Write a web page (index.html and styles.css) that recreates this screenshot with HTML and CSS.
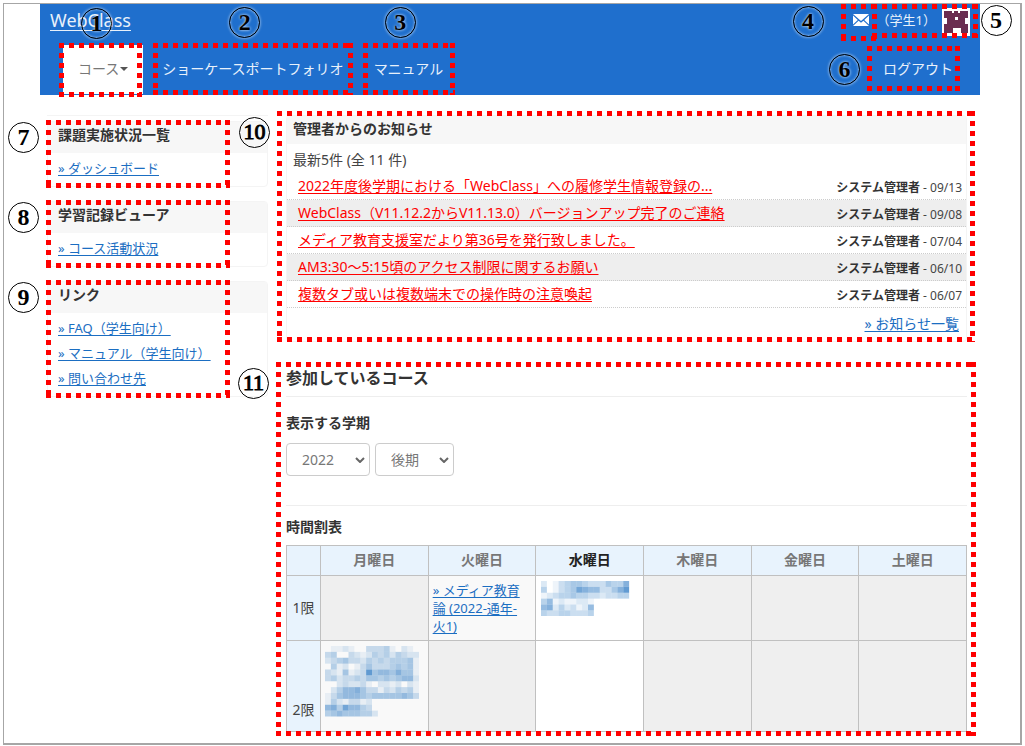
FILE: index.html
```html
<!DOCTYPE html>
<html lang="ja">
<head>
<meta charset="utf-8">
<meta name="viewport" content="width=device-width, initial-scale=1">
<title>WebClass</title>
<link rel="stylesheet" href="styles.css">
</head>
<body>
<div class="page">
  <header class="header">
    <div class="topbar">
      <a class="brand" href="#">WebClass</a>
      <div class="user">
        <a class="mail mark mark-mail" href="#" aria-label="メッセージ">
          <svg width="16" height="12" viewBox="0 0 16 12" aria-hidden="true"><path fill="#fff" d="M0 0h16L8 7zM0 1.6 4.8 6 0 10.4zM16 1.6 11.2 6 16 10.4zM5.6 6.8 8 8.8l2.4-2L16 12H0z"/></svg>
          <span class="num">4</span>
        </a>
        <a class="account mark mark-user" href="#">
          <span>（学生1）</span>
          <svg class="avatar" width="28" height="28" viewBox="0 0 28 28" aria-hidden="true"><path fill="#fff" d="M0 0h28v28H0z"/><path fill="#6b2d50" fill-rule="evenodd" d="M2 3h8v2h2V3h4v2h2V3h8v7h-3v6h3v9h-7v-5h-8v5H2v-9h3v-6H2zM13 9v3h3V9z"/></svg>
          <span class="num">5</span>
        </a>
      </div>
    </div>
    <nav class="nav">
      <ul class="menu">
        <li class="mark mark-course"><a class="active" href="#">コース<span class="caret"></span></a><span class="num">1</span></li>
        <li class="mark mark-showcase"><a href="#">ショーケースポートフォリオ</a><span class="num">2</span></li>
        <li class="mark mark-manual"><a href="#">マニュアル</a><span class="num">3</span></li>
      </ul>
      <ul class="menu">
        <li class="mark mark-logout"><a href="#">ログアウト</a><span class="num">6</span></li>
      </ul>
    </nav>
  </header>

  <main class="main">
    <aside class="sidebar">
      <section class="panel mark mark-side">
        <h2>課題実施状況一覧</h2>
        <ul class="links"><li><a href="#">» ダッシュボード</a></li></ul>
        <span class="num">7</span>
      </section>
      <section class="panel mark mark-side">
        <h2>学習記録ビューア</h2>
        <ul class="links"><li><a href="#">» コース活動状況</a></li></ul>
        <span class="num">8</span>
      </section>
      <section class="panel mark mark-side">
        <h2>リンク</h2>
        <ul class="links">
          <li><a href="#">» FAQ（学生向け）</a></li>
          <li><a href="#">» マニュアル（学生向け）</a></li>
          <li><a href="#">» 問い合わせ先</a></li>
        </ul>
        <span class="num">9</span>
      </section>
    </aside>

    <div class="content">
      <section class="panel news mark mark-news">
        <h2>管理者からのお知らせ</h2>
        <p class="count">最新5件 (全 11 件)</p>
        <ul class="news-list">
          <li><a href="#">2022年度後学期における「WebClass」への履修学生情報登録の...</a><span class="by"><b>システム管理者</b> - 09/13</span></li>
          <li><a href="#">WebClass（V11.12.2からV11.13.0）バージョンアップ完了のご連絡</a><span class="by"><b>システム管理者</b> - 09/08</span></li>
          <li><a href="#">メディア教育支援室だより第36号を発行致しました。</a><span class="by"><b>システム管理者</b> - 07/04</span></li>
          <li><a href="#">AM3:30～5:15頃のアクセス制限に関するお願い</a><span class="by"><b>システム管理者</b> - 06/10</span></li>
          <li><a href="#">複数タブ或いは複数端末での操作時の注意喚起</a><span class="by"><b>システム管理者</b> - 06/07</span></li>
        </ul>
        <p class="more"><a href="#">» お知らせ一覧</a></p>
        <span class="num two-digit">10</span>
      </section>

      <section class="courses mark mark-courses">
        <h1>参加しているコース</h1>
        <h3>表示する学期</h3>
        <form class="term">
          <select aria-label="年度"><option>2022</option></select>
          <select aria-label="学期"><option>後期</option></select>
        </form>
        <h3 class="table-title">時間割表</h3>
        <table class="timetable">
          <thead>
            <tr><th class="period"></th><th>月曜日</th><th>火曜日</th><th class="today">水曜日</th><th>木曜日</th><th>金曜日</th><th>土曜日</th></tr>
          </thead>
          <tbody>
            <tr class="first">
              <th class="period">1限</th><td></td>
              <td class="filled"><a href="#">» メディア教育論 (2022-通年-火1)</a></td>
              <td class="now"><svg class="mosaic" data-rows="201345543335447 401345876633579 123445443323344 461211221 672423126 433443334"></svg></td>
              <td></td><td></td><td></td>
            </tr>
            <tr class="second">
              <th class="period">2限</th>
              <td class="filled"><svg class="mosaic" data-rows="0112100333410210 3400321243424322 2345332434344451 0412013533345451 3215123956657551 3423343554545662 0023223102212021 0246675331324341 1356665455555653 14213312 67486643 456555442"></svg></td>
              <td></td><td class="now"></td><td></td><td></td><td></td>
            </tr>
          </tbody>
        </table>
        <span class="num two-digit">11</span>
      </section>
    </div>
  </main>
</div>
<script src="mosaic.js"></script>
</body>
</html>
```
FILE: styles.css
```css
* { box-sizing: border-box; }

body {
  margin: 3px 3px 2px;
  background: #fff;
  color: #444;
  font: 14px/24px "Noto Sans", "Noto Sans CJK JP", sans-serif;
}

h1, h2, h3, p, ul { margin: 0; padding: 0; }
ul { list-style: none; }
a { color: #1b6ec2; text-underline-offset: 2px; }

.page {
  border: solid #a6a6a6;
  border-width: 1px 2px 2px 1px;
  padding: 0 40px 11px 36px;
}

/* Header */
.header { background: #1f6fcd; color: #fff; }
.header a { color: #e8f1fb; }
.topbar {
  display: flex;
  justify-content: space-between;
  height: 41px;
  padding: 4px 10px 0;
}
.brand { font-size: 18px; text-underline-offset: 3px; }
.user { display: flex; gap: 8px; height: 28px; }
.user a { display: flex; align-items: flex-start; text-decoration: none; font-size: 13px; }
.mail svg { margin-top: 6px; }
.account { gap: 6px; }
.nav { display: flex; justify-content: space-between; height: 50px; padding: 0 12px 0 23px; }
.menu { display: flex; }
.menu a { display: flex; align-items: center; height: 49px; padding: 0 15px 1px; text-decoration: none; }
.menu .active { background: #fff; color: #777; margin-right: 4px; }
.caret { border: 4px solid transparent; border-top-color: #555; border-bottom: 0; margin-left: 1px; }

/* Columns */
.main {
  display: grid;
  grid-template-columns: 221px 1fr;
  gap: 18px;
  padding: 20px 13px 0 7px;
}
.sidebar {
  display: flex;
  flex-direction: column;
  gap: 14px;
  padding-top: 5px;
  border-top: 1px solid #f4f4f4;
}
.panel { border: 1px solid #f4f4f4; border-radius: 4px; }
.panel h2 {
  background: #f7f7f7;
  color: #333;
  font-size: 14px;
  line-height: 26px;
  padding: 0 10px 5px;
}
.links { padding: 3px 10px 5px; font-size: 13px; line-height: 25px; }
.links li { white-space: nowrap; }

/* News */
.news h2 { padding: 0 6px 2px; }
.count { padding: 2px 6px 0; line-height: 27px; }
.news-list li {
  display: flex;
  justify-content: space-between;
  height: 27px;
  padding: 0 4px 0 11px;
  border-bottom: 1px dotted #ccc;
  white-space: nowrap;
}
.news-list li:nth-child(even) { background: #eee; }
.news-list a { color: #f00; line-height: 26px; }
.by { font-size: 12px; line-height: 30px; }
.by b { color: #333; }
.more { padding: 2px 7px 3px; line-height: 28px; text-align: right; }

/* Courses */
.courses { margin-top: 22px; }
.courses h1 {
  color: #333;
  font-size: 16px;
  line-height: 28px;
  padding-bottom: 4px;
  border-bottom: 1px solid #eee;
}
.courses h3 { color: #333; font-size: 14px; margin: 14px 0 8px; }
.courses .table-title { margin: 9px 0 6px; }
.term { display: flex; gap: 5px; padding-bottom: 29px; border-bottom: 1px solid #eee; }
.term select {
  appearance: none;
  height: 33px;
  padding: 0 34px 0 15px;
  border: 1px solid #ccc;
  border-radius: 4px;
  background: #fff url("data:image/svg+xml,%3Csvg xmlns='http://www.w3.org/2000/svg' width='10' height='6'%3E%3Cpath d='M1 1l4 4 4-4' fill='none' stroke='%23666' stroke-width='2'/%3E%3C/svg%3E") no-repeat right 4px center;
  color: #777;
  font: inherit;
}

.timetable { width: 100%; border-collapse: collapse; table-layout: fixed; }
.timetable th, .timetable td { border: 1px solid #c0c0c0; padding: 5px; }
.timetable th { background: #e8f3fd; color: #777; height: 30px; padding: 0 0 1px; }
.timetable .period { width: 34px; color: #444; font-weight: 400; }
.timetable .today { color: #222; }
.timetable td { background: #efefef; vertical-align: top; font-size: 13px; line-height: 18px; }
.timetable .filled { background: #f9f9f9; padding: 5px 8px 5px 4px; }
.timetable .now { background: #fff; }
.first td { height: 65px; }
.second td { height: 91px; }
.timetable .second .period { vertical-align: bottom; padding-bottom: 9px; }
.mosaic { display: block; width: 94px; }

/* Numbered call-outs */
.mark { position: relative; }
.mark::after {
  content: "";
  position: absolute;
  inset: var(--inset);
  pointer-events: none;
  --x: repeating-linear-gradient(90deg, #f00 0 5px, transparent 5px 10px);
  --y: repeating-linear-gradient(#f00 0 5px, transparent 5px 10px);
  background:
    var(--x) top / 100% 5px no-repeat,
    var(--x) bottom / 100% 5px no-repeat,
    var(--y) left / 5px 100% no-repeat,
    var(--y) right / 5px 100% no-repeat;
}
.num {
  position: absolute;
  left: var(--nx);
  top: var(--ny);
  z-index: 2;
  width: 31px;
  height: 31px;
  border: 1px solid #000;
  border-radius: 50%;
  box-shadow: 0 0 3px rgba(255, 255, 255, .8), inset 0 0 3px rgba(255, 255, 255, .8);
  color: #000;
  font: bold 24px/28px "Liberation Serif", serif;
  text-align: center;
  text-shadow: 0 0 3px #fff;
}
.two-digit { font-size: 22px; font-weight: 400; -webkit-text-stroke: 1px #000; }
.mark-mail { --inset: -4px -8px -5px -12px; --nx: -60px; --ny: -2px; }
.mark-user { --inset: -4px -8px -2px -5px; --nx: 104px; --ny: -3px; }
.mark-course { --inset: -2px 5px -2px -4px; --nx: 18px; --ny: -37px; }
.mark-showcase { --inset: -2px 6px 0 6px; --nx: 82px; --ny: -38px; }
.mark-manual { --inset: -2px 3px 0 4px; --nx: 26px; --ny: -38px; }
.mark-logout { --inset: 1px 8px 4px -1px; --nx: -39px; --ny: 9px; }
.mark-side { --inset: -2px 37px -2px -2px; --nx: -40px; --ny: 0px; }
.mark-news { --inset: -5px -9px -1px -10px; --nx: -48px; --ny: 1px; }
.mark-courses { --inset: -2px -9px -4px -10px; --nx: -48px; --ny: 4px; }
```
FILE: mosaic.js
```js
// Draws a pixelated block: one digit per cell, giving its shade.
const CELL = 6;
document.querySelectorAll(".mosaic").forEach((svg) => {
  const rows = svg.dataset.rows.split(" ");
  svg.setAttribute("viewBox", `0 0 ${CELL * 16} ${CELL * rows.length}`);
  rows.forEach((row, y) => {
    [...row].forEach((shade, x) => {
      const rect = document.createElementNS("http://www.w3.org/2000/svg", "rect");
      rect.setAttribute("x", x * CELL);
      rect.setAttribute("y", y * CELL);
      rect.setAttribute("width", CELL);
      rect.setAttribute("height", CELL);
      rect.setAttribute("fill", "#3d84c8");
      rect.setAttribute("fill-opacity", shade * 0.09);
      svg.append(rect);
    });
  });
});
```
